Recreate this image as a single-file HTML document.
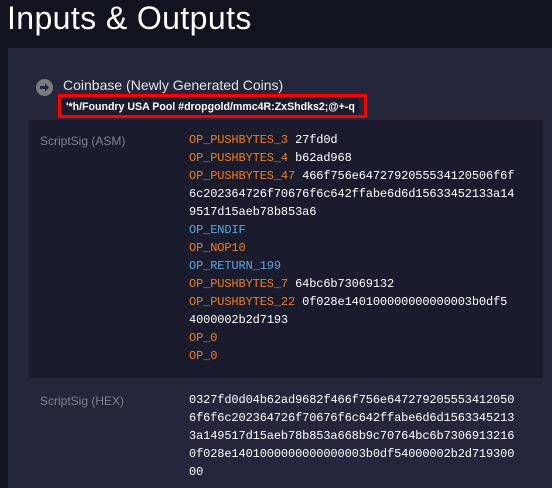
<!DOCTYPE html>
<html><head><style>
body{margin:0;width:552px;height:480px;overflow:hidden;background:#11131f;font-family:"Liberation Sans",sans-serif;position:relative}
.t{position:absolute;left:7px;top:0px;font-size:32px;color:#fff;letter-spacing:0.4px}
.panel{position:absolute;left:8px;top:48px;width:544px;height:440px;background:#24263b}
.ic{position:absolute;left:36px;top:79px;width:17px;height:17px;border-radius:50%;background:#7a7b82}
.cb{position:absolute;left:63px;top:77px;font-size:14px;color:#e4e4ea}
.red{position:absolute;left:58px;top:94px;width:303px;height:18px;border:3px solid #f00;}
.chip{position:absolute;left:62px;top:99px;width:297px;height:16px;background:#1a1c2e;border-radius:3px}
.ct{position:absolute;left:66px;top:101px;font-size:10.6px;font-weight:bold;color:#fff}
.asm{position:absolute;left:29px;top:120px;width:514px;height:258px;background:#1a1c2e}
.lbl{position:absolute;left:40px;font-size:12px;color:#80828f}
.code{position:absolute;left:189px;font-family:"Liberation Mono",monospace;font-size:12px;line-height:18px;color:#fff;white-space:pre;letter-spacing:-0.13px}
.o{color:#f07d18}.b{color:#57a8e0}
</style></head><body>
<div class="t">Inputs &amp; Outputs</div>
<div class="panel"></div>
<div class="ic"><svg width="17" height="17" viewBox="0 0 17 17"><path d="M4 7h5V4.5l4 4-4 4V10H4z" fill="#24263b"/></svg></div>
<div class="cb">Coinbase (Newly Generated Coins)</div>
<div class="chip"></div>
<div class="red"></div>
<div class="ct">'*h/Foundry USA Pool #dropgold/mmc4R:ZxShdks2;@+-q</div>
<div class="asm"></div>
<div class="lbl" style="top:134px">ScriptSig (ASM)</div>
<div class="code" style="top:131px"><span class="o">OP_PUSHBYTES_3</span> 27fd0d
<span class="o">OP_PUSHBYTES_4</span> b62ad968
<span class="o">OP_PUSHBYTES_47</span> 466f756e6472792055534120506f6f
6c202364726f70676f6c642ffabe6d6d15633452133a14
9517d15aeb78b853a6
<span class="b">OP_ENDIF</span>
<span class="o">OP_NOP10</span>
<span class="b">OP_RETURN_199</span>
<span class="o">OP_PUSHBYTES_7</span> 64bc6b73069132
<span class="o">OP_PUSHBYTES_22</span> 0f028e140100000000000003b0df5
4000002b2d7193
<span class="o">OP_0</span>
<span class="o">OP_0</span></div>
<div class="lbl" style="top:394px">ScriptSig (HEX)</div>
<div class="code" style="top:391px">0327fd0d04b62ad9682f466f756e647279205553412050
6f6f6c202364726f70676f6c642ffabe6d6d1563345213
3a149517d15aeb78b853a668b9c70764bc6b7306913216
0f028e1401000000000000003b0df54000002b2d719300
00</div>
</body></html>
